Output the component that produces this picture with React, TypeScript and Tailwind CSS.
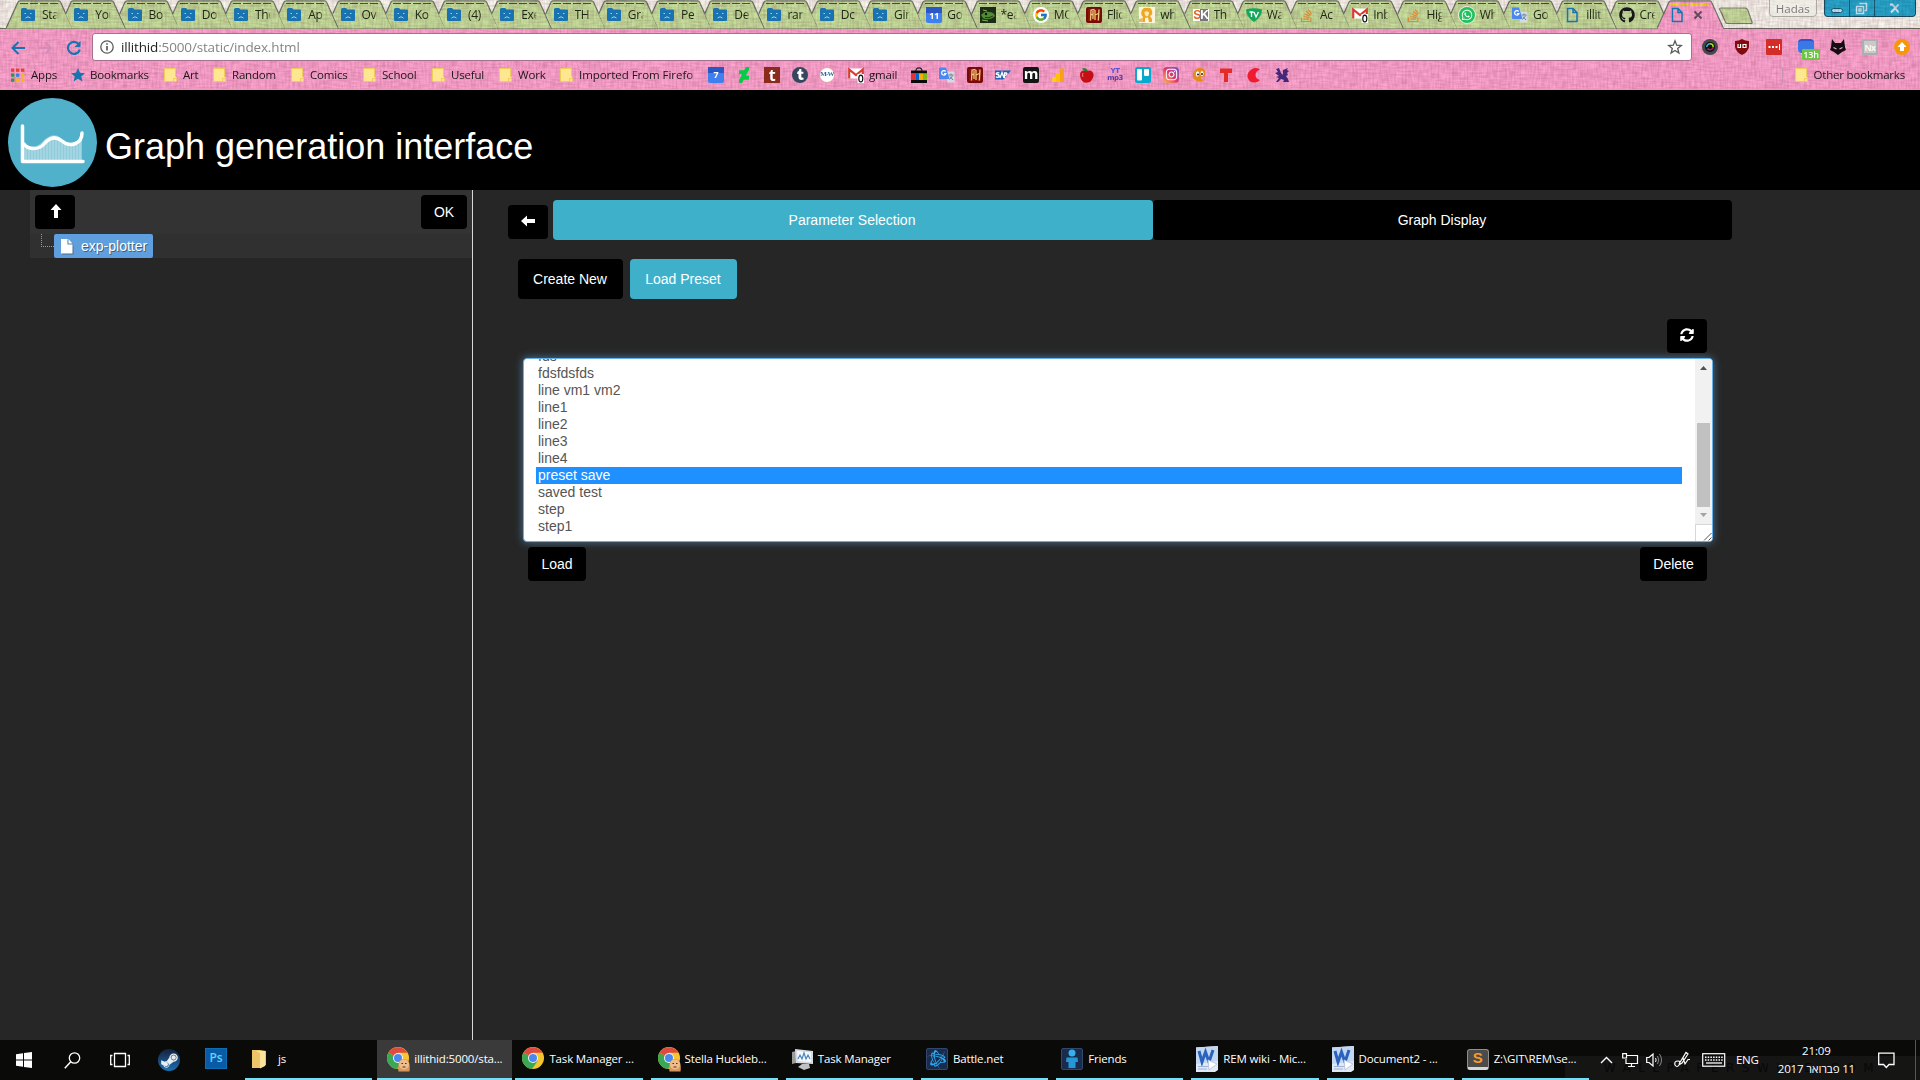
import React from "react";
import { FcGoogle } from "react-icons/fc";
import { FaStackOverflow, FaWhatsapp, FaGithub, FaInstagram, FaTumblr, FaDeviantart, FaSteamSymbol, FaSyncAlt, FaBattleNet } from "react-icons/fa";

type P = { children?: React.ReactNode; className?: string };

const Svg = ({ w = 16, h = 16, vb, children, className = "" }: P & { w?: number; h?: number; vb?: string }) => (
  <svg width={w} height={h} viewBox={vb ?? `0 0 ${w} ${h}`} fill="none" className={`block shrink-0 ${className}`}>
    {children}
  </svg>
);

const Sad = () => (
  <Svg>
    <path d="M0 2.500Q0 1 1.500 1H5L6.500 2.500H13Q14 2.500 14 3.500V13Q14 14 13 14H1Q0 14 0 13Z" fill="#1873b0" />
    <path d="M3.500 6.500h1.500M9 6.500h1.500M4.500 11Q7 8.500 9.500 11" stroke="#b9d9ec" strokeWidth="0.900" />
  </Svg>
);
const Cal = ({ n }: { n: string }) => (
  <div className="relative flex h-4 w-4 items-center justify-center rounded-b-[2px] border-t-[6px] border-[#2a56c6] bg-[#3f7ff0]">
    <span className="-mt-1.5 font-['Open_Sans',sans-serif] text-[9px] leading-none font-bold text-white">{n}</span>
  </div>
);
const Gmail = () => (
  <Svg>
    <path d="M0 1.500h16v10H0z" fill="#fff" />
    <path d="M1.200 11.500V2.500L8 8L14.800 2.500V11.500" stroke="#d93a32" strokeWidth="2.200" />
    <rect x="9.500" y="7" width="6.500" height="9" fill="#fff" />
    <ellipse cx="12.800" cy="11.500" rx="2" ry="3.300" stroke="#111" strokeWidth="1.200" />
  </Svg>
);
const FH = () => (
  <Svg>
    <rect width="16" height="16" rx="2" fill="#8c120c" />
    <rect x="1" y="1" width="14" height="14" rx="1" stroke="#5a0806" />
    <path d="M4.500 13.500L5 3L8.500 2.500M4.800 7.500H7.500M9 3V13M9 8L12.500 6.500M13 2.500L12.300 13.500M7 4V12" stroke="#f0c878" strokeWidth="1.300" />
  </Svg>
);
const Translate = () => (
  <Svg>
    <path d="M6 4.500h9.500V15.500H8.500z" fill="#d5dbe2" />
    <path d="M9.500 8h5M12 6.500V8M13.800 8.500L10.500 12.500M11 9.500L14 13" stroke="#68809a" strokeWidth="1" />
    <path d="M0 1.500Q0 .5 1 .5H7L10.500 12H1Q0 12 0 11z" fill="#4a87ee" />
    <path d="M6.600 4.500A2.200 2.200 0 1 0 7 6.500H5" stroke="#fff" strokeWidth="1.200" />
  </Svg>
);
const PageIcon = () => (
  <Svg>
    <path d="M2.500 1.500H8L12 5.500V14.500H2.500zM8 1.500V5.500H12" stroke="#1873b0" strokeWidth="1.500" />
  </Svg>
);
const Folder = () => (
  <Svg w={14}>
    <path d="M.5 1.500H11.500V9.500L12.500 10.500V14.500H.5z" fill="#ffe78f" stroke="#eecb5d" />
    <path d="M9.500 14V11.500H12" stroke="#eecb5d" />
  </Svg>
);
const Letter = ({ children, className = "" }: P) => (
  <div className={`flex h-4 w-4 shrink-0 items-center justify-center font-['Open_Sans',sans-serif] leading-none font-bold ${className}`}>{children}</div>
);
const Frog = () => (
  <Svg>
    <rect width="16" height="16" fill="#1c2a16" />
    <path d="M1 8Q5 3 9 5Q14 5 15 9Q11 13 5 12Q2 11 1 8z" fill="#4f8a35" />
    <path d="M3 3l4 1M2 13l6 1" stroke="#86b457" />
    <circle cx="6" cy="7" r="1.200" fill="#111" />
    <path d="M5 10.500Q9 11.500 13 9" stroke="#22381a" />
  </Svg>
);
const Blonde = () => (
  <Svg>
    <rect width="16" height="16" fill="#fbf3dc" />
    <path d="M3 3Q5 0 8 1Q12 0 13 4Q14 8 11 9L13 12V15H3L4 10Q1 7 3 3z" fill="#eea720" />
    <path d="M5.500 5Q8 3.500 10 5.500Q10 9 8 9.500Q5.500 9 5.500 5z" fill="#fde7b8" />
    <path d="M6 11L9 10.500L10 15H6z" fill="#fff6e0" />
    <path d="M0 12l4-1v4H0z" fill="#e9bb62" />
  </Svg>
);
const Stack = () => <FaStackOverflow size={15} className="text-[#e08a2c]" />;

const favs: Array<[string, React.ReactNode]> = [
  ...["Sta", "You", "Bo", "Do", "The", "Ap", "Ov", "Ko", "(4)", "Exe", "TH", "Gra", "Pe", "De", "ran", "Dc", "Gin"].map(
    (t): [string, React.ReactNode] => [t, <Sad />],
  ),
  ["Go", <Cal n="11" />],
  ["*ea", <Frog />],
  ["MO", <div className="flex h-4 w-4 items-center justify-center rounded-full bg-white"><FcGoogle size={14} /></div>],
  ["Flic", <FH />],
  ["wh", <Blonde />],
  ["Th", <div className="flex h-3 w-4 items-center justify-center bg-white font-['Liberation_Sans',sans-serif] text-[12px] leading-none font-bold tracking-[-1px] text-[#e8622a]">S<span className="bg-[#777] text-white">K</span></div>],
  ["Wa", <Svg><path d="M0 2.500Q8 0 16 2.500Q16 10 8 15Q0 10 0 2.500z" fill="#12a75b" /><path d="M3.500 5h4M5.500 5v5M8 5l2 5l2.500-5" stroke="#fff" strokeWidth="1.300" /></Svg>],
  ["Ac", <Stack />],
  ["Inb", <Gmail />],
  ["Hig", <Stack />],
  ["Wh", <div className="flex h-4 w-4 items-center justify-center rounded-full bg-[#22c15e] text-white ring-1 ring-white/70"><FaWhatsapp size={12} /></div>],
  ["Go", <Translate />],
  ["illit", <PageIcon />],
  ["Cre", <FaGithub size={16} className="text-[#15181a]" />],
];

const TabShape = ({ first, active }: { first?: boolean; active?: boolean }) => (
  <svg width="68" height="30" viewBox="0 0 68 30" fill="none" className="absolute top-0 left-0 z-0">
    <path d={first || active ? "M0 28.500L12 2Q12.500 .8 14 .8H52.500Q54 .8 54.500 2L66.500 28.500Z" : "M6.700 14L12 2Q12.500 .8 14 .8H52.500Q54 .8 54.500 2L66.500 28.500H13Z"} fill={active ? "#fca6cf" : "#c6e09c"} />
    <path d={first || active ? "M0 28.500L12 2Q12.500 .8 14 .8H52.500Q54 .8 54.500 2L66.500 28.500" : "M6.700 14L12 2Q12.500 .8 14 .8H52.500Q54 .8 54.500 2L66.500 28.500"} stroke="#71796a" strokeWidth="1.200" />
    {active ? <path d="M1 28.500H66" stroke="#fca6cf" strokeWidth="2" /> : null}
    <path d={active ? "M13.500 4.500H53" : "M14 3.500H52"} stroke={active ? "#f7e414" : "#a3159b"} strokeWidth={active ? 2 : 1.200} strokeDasharray="8 2" />
  </svg>
);

const bookmarks: Array<[number, React.ReactNode, string?]> = [
  [60, <Svg w={14}>{[0, 1, 2].map((r) => [0, 1, 2].map((c) => <rect key={`${r}${c}`} x={c * 5} y={1.5 + r * 5} width="3.300" height="3.300" fill={[["#e84235", "#e84235", "#e84235"], ["#2d9a4b", "#3c7de0", "#f5b912"], ["#2d9a4b", "#f5b912", "#f5b912"]][r][c]} />))}</Svg>, "Apps"],
  [93, <Svg w={14} vb="1 1 14 14"><path d="M8 1L10 5.800L15 6.200L11.200 9.500L12.500 14.500L8 11.800L3.500 14.500L4.800 9.500L1 6.200L6 5.800z" fill="#1873b0" /></Svg>, "Bookmarks"],
  [49, <Folder />, "Art"],
  [78, <Folder />, "Random"],
  [72, <Folder />, "Comics"],
  [69, <Folder />, "School"],
  [67, <Folder />, "Useful"],
  [61, <Folder />, "Work"],
  [148, <Folder />, "Imported From Firefo"],
  [28, <Cal n="7" />],
  [28, <FaDeviantart size={16} className="text-[#05cc47]" />],
  [28, <Letter className="bg-[#8a2b1d] text-[16px] text-white">t</Letter>],
  [28, <div className="flex h-4 w-4 items-center justify-center rounded-full bg-[#36465d] text-white"><FaTumblr size={11} /></div>],
  [28, <div className="flex h-3.5 w-3.5 items-center justify-center rounded-full bg-white font-['Liberation_Serif',serif] text-[7px] leading-none font-bold tracking-[-0.8px] text-[#2f6f9f] ring-1 ring-[#e8a0a8]">M-W</div>],
  [63, <Gmail />, "gmail"],
  [28, <Svg><path d="M5 4Q5 .8 8 .8Q11 .8 11 4" stroke="#222" strokeWidth="1.200" /><path d="M0 3.500h16v3H0zM0 13h16v3H0z" fill="#0a0a0a" /><path d="M0 6.500h4.500V13H0z" fill="#e43137" /><path d="M4.500 6.500H8V13H4.500z" fill="#0063d1" /><path d="M8 6.500h4V13H8z" fill="#f4ae01" /><path d="M12 6.500h4V13h-4z" fill="#85b716" /></Svg>],
  [28, <Translate />],
  [28, <FH />],
  [28, <Svg><path d="M0 3.500h16L8.500 12.500H0z" fill="#1a62b5" /><path d="M4.500 6Q1 5 1.200 7Q4.500 7.500 4.200 9.500Q3 11 .8 9.800M5 11L7 5.500L9 11M9.500 11V6H11.500Q13 7.500 10 8.500" stroke="#fff" strokeWidth="1.300" /></Svg>],
  [28, <Letter className="rounded-[2px] bg-[#141414] pb-0.5 text-[15px] text-white">m</Letter>],
  [28, <Svg><path d="M1 10h4v5H1z" fill="#ffc928" /><path d="M5 6h4v9H5z" fill="#ffc107" /><path d="M9 1.500h4V15H9z" fill="#f9a01b" /></Svg>],
  [28, <Svg><path d="M8 4Q2 2 1 7Q1 13 5 15.500Q8 16 11 15Q15 11 14.500 7Q13 2 8 4z" fill="#c50f14" /><path d="M3 1.500Q7-.5 9 4Q5 5 3 1.500z" fill="#2f7d32" /><path d="M4 6Q3 8 4 10" stroke="#f0797c" /></Svg>],
  [28, <div className="w-4 text-center font-['DejaVu_Sans',sans-serif] text-[7px] leading-[7px] font-bold tracking-[-0.5px] text-[#5a55d6]"><div>YT</div><div className="text-[#5c3aa5]">mp3</div></div>],
  [28, <Svg><rect width="16" height="16" rx="2" fill="#06aacf" /><rect x="2" y="2" width="5" height="11.500" rx="1" fill="#fff" /><rect x="9" y="2" width="5" height="7" rx="1" fill="#fff" /></Svg>],
  [28, <div className="flex h-4 w-4 items-center justify-center rounded bg-linear-to-tr from-[#fdb645] via-[#e0356c] to-[#6b4bd0] text-white"><FaInstagram size={13} /></div>],
  [28, <Svg><path d="M13 2Q8-1 4 3Q0 8 3 12Q7 16 13 14Q9 12 10 10L14 9Q15 4 13 2z" fill="#e58a1c" /><ellipse cx="6.500" cy="7" rx="1.700" ry="2.800" fill="#fff" /><ellipse cx="11" cy="6.500" rx="1.500" ry="2.500" fill="#fff" /><circle cx="7" cy="7.500" r="1" fill="#222" /><circle cx="11" cy="7" r="1" fill="#222" /></Svg>],
  [28, <Svg><path d="M1 1.500h12v4.500H9V15H5V6H1z" fill="#e62b25" /></Svg>],
  [28, <Svg><path d="M13 2.500Q9 0 5 2Q0 5 .5 10Q2 16 8 15.500Q11 15 13 13Q8.500 12 8.500 8Q8.500 4 13 2.500z" fill="#ee1c2e" /></Svg>],
  [28, <Svg><path d="M1 2L4 1L6 6L8 8L8 3L13 1L12 3L14 4L12 6L13 8L11 9L13 12L14 15H8L9 13L6 12L3 15H1L4 11L1 10L4 9L0 6L3 5z" fill="#43277b" /></Svg>],
];

const Texture = () => (
  <svg width="1920" height="90" className="pointer-events-none absolute top-0 left-0 z-[1] mix-blend-multiply">
    <filter id="weft" x="0" y="0" width="100%" height="100%">
      <feTurbulence type="fractalNoise" baseFrequency="0.1 0.55" numOctaves="1" seed="3" />
      <feColorMatrix values="0 0 0 0 0.4  0 0 0 0 0.2  0 0 0 0 0.3  1.3 0 0 0 -0.45" />
    </filter>
    <filter id="warp" x="0" y="0" width="100%" height="100%">
      <feTurbulence type="fractalNoise" baseFrequency="0.55 0.1" numOctaves="1" seed="8" />
      <feColorMatrix values="0 0 0 0 0.4  0 0 0 0 0.2  0 0 0 0 0.3  1.3 0 0 0 -0.45" />
    </filter>
    <rect width="1920" height="90" filter="url(#weft)" opacity="0.45" />
    <rect width="1920" height="90" filter="url(#warp)" opacity="0.45" />
  </svg>
);

function Browser() {
  return (
    <header className="relative isolate h-[90px] overflow-hidden border-b border-[#b9b5b0] bg-[#f7f7ec] font-['Open_Sans','Noto_Sans',sans-serif] text-[11.5px] tracking-[-0.2px] text-[#1f141a]">
      <Texture />
      <div className="flex h-[28px] pl-1.5">
        {favs.map(([t, icon], i) => (
          <div key={i} className="relative w-[53.26px] shrink-0">
            <TabShape first={i === 0} />
            <div className="relative z-[2] flex h-full items-center pt-0.5 pl-[15px]">
              <div className="w-[21px]">{icon}</div>
              <div className="w-4 overflow-hidden mask-r-from-75% mask-r-to-100% text-[12px] tracking-[-0.3px] whitespace-nowrap text-[#1c2712]">{t}</div>
            </div>
          </div>
        ))}
        <div className="relative w-[62px] shrink-0">
          <TabShape active />
          <div className="relative z-[2] flex h-full items-center pt-0.5 pl-[13px]">
            <PageIcon />
            <Svg w={10} h={10} className="ml-[7px]"><path d="M1.500 1.500l7 7M8.500 1.500l-7 7" stroke="#5e4a54" strokeWidth="1.800" /></Svg>
          </div>
        </div>
        <Svg w={34} h={18} className="mt-[7px]"><path d="M1 3Q0 1 2 1H26Q28 1 28.800 3L33 15Q33.500 16.500 32 16.500H8.500Q7 16.500 6.500 15z" fill="#c6e09c" stroke="#7c8273" strokeWidth="1.200" /></Svg>
        <div className="relative z-[2] mt-[-4px] ml-[16px] flex h-[21px] w-12 items-center justify-center rounded border border-[#a9a9a1] bg-[#efeee6]/60 pt-1 text-[11.5px] tracking-normal text-[#777] [text-shadow:0_0_2px_#fff]">Hadas</div>
        <div className="ml-[7px] flex h-[17px] w-[92px] rounded-b border border-t-0 border-[#1b4f63] bg-[#27a8cd]">
          <div className="flex w-[25px] items-center justify-center border-r border-[#1b5f78]"><div className="mt-1 h-[5px] w-3 rounded-sm border border-[#1d5c74] bg-[#bfe6f1]" /></div>
          <div className="flex w-[25px] items-center justify-center border-r border-[#1b5f78]"><Svg w={13} h={13}><path d="M4.500 1.500h7v7h-2M1.500 4.500h7v7h-7zM4 7h2v2H4z" stroke="#cdebf4" strokeWidth="1.500" /></Svg></div>
          <div className="flex flex-1 items-center justify-center"><Svg w={11} h={11}><path d="M1 1.500h2.500L9.500 9.500M9.500 1.500L2 9.500" stroke="#cdebf4" strokeWidth="2" /></Svg></div>
        </div>
      </div>

      <div className="h-[62px] border-t border-[#6f6f63] bg-[#fca6cf] bg-clip-padding">
        <div className="relative z-[2] flex h-[32px] items-end pl-[11px]">
          <div className="flex h-[27px] w-[81px] items-center gap-3">
            <Svg><path d="M14 8H1.500M7.500 2L1.500 8L7.500 14" stroke="#1873b0" strokeWidth="2" /></Svg>
            <Svg><path d="M0 8H12M6.500 2.500L12 8L6.500 13.500" stroke="#d58bb8" strokeWidth="2" /></Svg>
            <Svg><path d="M11.600 4A6 6 0 1 0 12.800 9.500" stroke="#1873b0" strokeWidth="2.200" /><path d="M13.500 1v6H7.500z" fill="#1873b0" /></Svg>
          </div>
          <div className="flex h-[28px] w-[1600px] items-center rounded-[3px] border border-[#a8708c] bg-white px-[7px]">
            <Svg><circle cx="7" cy="8" r="6.200" stroke="#5a5a5a" strokeWidth="1.300" /><path d="M7 7v4.500M7 4.200v1.600" stroke="#5a5a5a" strokeWidth="1.700" /></Svg>
            <div className="ml-[5px] text-[13.5px] tracking-[-0.15px] text-[#858585]"><span className="text-[#222]">illithid</span>:5000/static/index.html</div>
            <Svg className="mr-px ml-auto"><path d="M8 1.800L9.700 6.200L14.300 6.500L10.700 9.500L11.900 14L8 11.500L4.100 14L5.300 9.500L1.700 6.500L6.300 6.200z" stroke="#5a5a5a" strokeWidth="1.300" /></Svg>
          </div>
          <div className="ml-[10px] flex h-[28px] items-center gap-4">
            <Svg><circle cx="8" cy="8" r="8" fill="#45474b" /><circle cx="8" cy="8" r="5" fill="#111" /><path d="M4.800 8A3.200 3.200 0 0 1 8 4.800" stroke="#2dc1d8" strokeWidth="1.500" /><path d="M8 4.800A3.200 3.200 0 0 1 11.200 8" stroke="#a8e01e" strokeWidth="1.500" /><path d="M11.200 8A3.200 3.200 0 0 1 5.500 9.500" stroke="#b21a8a" strokeWidth="1.500" /></Svg>
            <Svg><path d="M8 0Q11 2 15 2V8Q14 13 8 16Q2 13 1 8V2Q5 2 8 0z" fill="#800a0e" /><path d="M4 5v3.500h2.500V5M9 5v3.500h3V5.500H9" stroke="#fff" strokeWidth="1.200" /></Svg>
            <Svg><rect width="16" height="16" rx="1" fill="#d32d27" /><path d="M2.500 7h2v2h-2zM6 7h2v2H6zM9.500 7h2v2h-2zM13 5h1v6h-1z" fill="#fff" /></Svg>
            <div className="relative h-4 w-4"><div className="h-3.5 w-4 rounded-sm border-t-2 border-[#2a56c6] bg-[#3b78e7]" /><div className="absolute top-[10px] left-1 flex h-[11px] w-[18px] items-center justify-center rounded-[1px] bg-[#6cc644] text-[9px] leading-none font-semibold text-white">13h</div></div>
            <Svg><path d="M2 0L5 4H11L14 0L15 8L16 11L12 13L8 16L4 13L0 11L1 8z" fill="#140c12" /><path d="M3.500 8.500L6.500 10M12.500 8.500L9.500 10" stroke="#f7a6cc" strokeWidth="1.200" /></Svg>
            <div className="flex h-4 w-4 items-center justify-center border-2 border-[#aeaeae] bg-[#c9c9c9] text-[9px] leading-none font-semibold tracking-[-0.5px] text-white">Nx</div>
            <Svg><circle cx="8" cy="8" r="8" fill="#f7960a" /><path d="M8 3L12.500 8H10V12H6V8H3.500z" fill="#fff" /></Svg>
          </div>
        </div>
        <div className="relative z-[2] flex h-[27px] items-center pl-[11px]">
          {bookmarks.map(([w, icon, t], i) => (
            <div key={i} className="flex shrink-0 items-center gap-[5px]" style={{ width: w }}>
              {icon}
              {t ? <span className={`whitespace-nowrap ${i === 0 ? "pl-px" : ""} ${t.length > 12 ? "mask-r-from-95% mask-r-to-110% tracking-[-0.05px]" : ""}`}>{t}</span> : null}
            </div>
          ))}
          <div className="mr-3 ml-auto h-4 w-px bg-[#c693b3]" />
          <Folder />
          <span className="mr-[15px] ml-[5px]">Other bookmarks</span>
        </div>
      </div>
    </header>
  );
}

const Btn = ({ children, className = "" }: P) => (
  <button className={`flex shrink-0 items-center justify-center rounded text-[14px] leading-5 text-white ${className}`}>{children}</button>
);

const presets = ["fds", "fdsfdsfds", "line vm1 vm2", "line1", "line2", "line3", "line4", "preset save", "saved test", "step", "step1"];

function GraphPage() {
  return (
    <div className="flex h-[950px] flex-col font-['Liberation_Sans',Arial,sans-serif]">
      <div className="flex h-[100px] shrink-0 bg-black pt-2 pl-2">
        <Svg w={89} h={89}>
          <ellipse cx="44.500" cy="44.500" rx="44.500" ry="44.500" fill="#51b1ca" />
          <path d="M15 45Q26 54 36 42Q47 32 56 43Q65 49 74 38V62H15z" fill="#8fcbda" />
          <path d="M18 50V62M21 51V62M24 51V62M27 50V62M30 50V62M33 48V62M36 45V62M39 42V62M42 40V62M45 39V62M48 39V62M51 41V62M54 43V62M57 46V62M60 47V62M63 47V62M66 46V62M69 44V62M72 41V62" stroke="#b4dfe9" />
          <path d="M14.500 28V63.500H75" stroke="#fff" strokeWidth="3.500" strokeLinecap="round" strokeLinejoin="round" />
          <path d="M16 46C20 52 31 52 36 46C42 39 48 38 54 43C62 50 74 46 74 35" stroke="#fff" strokeWidth="3.500" strokeLinecap="round" />
        </Svg>
        <h1 className="mt-[29px] ml-2 text-[36px] leading-[40px] whitespace-nowrap text-white">Graph generation interface</h1>
      </div>

      <div className="flex flex-1 bg-[#262626]">
        <aside className="w-[473px] shrink-0 border-r border-[#d8d8d8] pl-[30px]">
          <div className="flex h-11 justify-between bg-[#333] py-[5px] pr-[5px] pl-[5px]">
            <Btn className="h-[34px] w-10 bg-black">
              <Svg w={12} h={14} className="-mt-0.5 ml-px"><path d="M6 0L11.500 6H8V14H4V6H.5z" fill="#fff" /></Svg>
            </Btn>
            <Btn className="h-[34px] w-[46px] bg-black">OK</Btn>
          </div>
          <div className="flex h-6 bg-[#303030] pl-[11px]">
            <div className="h-[13px] w-[13px] border-b border-l border-dotted border-[#999]" />
            <div className="flex h-6 w-[99px] items-center rounded-xs bg-[#5f9fdd] pl-[7px] text-[14px] text-white [text-shadow:1px_1px_0_#3e5f7d]">
              <Svg w={12} h={15} className="mr-2 drop-shadow-[1px_1px_0_#4a6d8c]"><path d="M0 0H6.500V5.500H11.500V14.500H0zM7.500 0L11.500 4.500H7.500z" fill="#fff" /></Svg>
              exp-plotter
            </div>
          </div>
        </aside>

        <main className="w-[1240px] pl-[35px]">
          <div className="flex items-start pt-[10px]">
            <Btn className="mt-[5px] mr-[5px] h-[34px] w-10 bg-black">
              <Svg w={14} h={12} className="-mt-0.5 -ml-px"><path d="M0 6L6 .5V4H14V8H6V11.500z" fill="#fff" /></Svg>
            </Btn>
            <Btn className="h-10 w-[600px] bg-[#3eb0ca] pr-0.5">Parameter Selection</Btn>
            <Btn className="h-10 w-[579px] bg-black pr-px">Graph Display</Btn>
          </div>
          <div className="mt-[19px] flex gap-[7px] pl-[10px]">
            <Btn className="h-10 w-[105px] bg-black pr-px">Create New</Btn>
            <Btn className="h-10 w-[107px] bg-[#3eb0ca] pr-px">Load Preset</Btn>
          </div>
          <div className="mt-[20px] flex justify-end pr-[6px]">
            <Btn className="h-[34px] w-10 bg-black"><FaSyncAlt size={14} className="-mt-0.5" /></Btn>
          </div>
          <div className="mt-[5px] ml-[15px] flex h-[184px] w-[1190px] overflow-hidden rounded border border-[#66afe9] bg-white shadow-[0_0_8px_rgba(102,175,233,0.6)]">
            <div className="mt-[-11px] flex-1 pr-[13px] pl-3">
              {presets.map((p) => (
                <div key={p} className={`h-[17px] pl-0.5 text-[14px] leading-[16px] ${p === "preset save" ? "bg-[#1e90ff] text-white" : "text-[#555]"}`}>{p}</div>
              ))}
            </div>
            <div className="flex w-[17px] flex-col items-center bg-[#f1f1f1]">
              <Svg w={7} h={4} className="mt-[7px]"><path d="M3.500 0L7 4H0z" fill="#505050" /></Svg>
              <div className="mt-[53px] h-[84px] w-[13px] bg-[#c1c1c1]" />
              <Svg w={7} h={4} className="mt-[6px]"><path d="M3.500 4L7 0H0z" fill="#a3a3a3" /></Svg>
              <div className="mt-auto flex h-[17px] w-full items-end justify-end border-t border-l border-[#d8d8d8] bg-white">
                <Svg w={9} h={9}><path d="M1 8.500L8.500 1M5.500 8.500L8.500 5.500" stroke="#555" /></Svg>
              </div>
            </div>
          </div>
          <div className="mt-[5px] flex justify-between pr-[6px] pl-5">
            <Btn className="h-[34px] w-[58px] bg-black">Load</Btn>
            <Btn className="h-[34px] w-[67px] bg-black">Delete</Btn>
          </div>
        </main>
      </div>
    </div>
  );
}

const Chrome = ({ badge }: { badge?: boolean }) => (
  <Svg w={24} h={26}>
    <circle cx="11" cy="12" r="11" fill="#f6c52d" />
    <path d="M11 12L1.500 6.500A11 11 0 0 0 10 23L15.800 14.800z" fill="#3aa757" />
    <path d="M11 12L1.500 6.500A11 11 0 0 1 20.500 6.800H11z" fill="#dd4b3e" />
    <circle cx="11" cy="12" r="5" fill="#f4f4f4" />
    <circle cx="11" cy="12" r="4" fill="#4a88ee" />
    {badge ? (
      <>
        <path d="M11.500 25.500Q10 13 17 13Q24 13 22.500 25.500z" fill="#d9955c" />
        <circle cx="17" cy="18.500" r="5" fill="#eebd8a" />
        <path d="M14.500 17.500h1.500M18 17.500h1.500M15.500 21h3" stroke="#4d2d1c" strokeWidth="1.200" />
      </>
    ) : null}
  </Svg>
);
const Word = () => (
  <Svg w={22} h={26}>
    <path d="M0 1.500L22 0V24L19 26H0z" fill="#dfe9f7" />
    <path d="M0 1.500L22 0V15L0 18z" fill="#c4d7f0" />
    <path d="M3 5L6 16L9.500 6L13 16L17 4" stroke="#2a62bd" strokeWidth="3" />
    <path d="M2 20.500H13M2 23H11" stroke="#9db3d6" />
    <path d="M12 14L21 18L13 24z" fill="#fff" stroke="#b8c8e0" />
  </Svg>
);
const Tile = ({ children }: P) => (
  <div className="flex h-[22px] w-[22px] items-center justify-center rounded-xs border border-[#32476b] bg-[#1a2c4d] text-[#2ea8ee]">{children}</div>
);

const tasks: Array<[string, React.ReactNode]> = [
  ["js", <Svg w={16} h={20}><path d="M0 1H8L14 2V16L8 19H0z" fill="#ecc568" /><path d="M4 2H13V17L8 19.500V4z" fill="#ffe39a" /></Svg>],
  ["illithid:5000/sta...", <Chrome badge />],
  ["Task Manager ...", <Chrome />],
  ["Stella Huckleb...", <Chrome badge />],
  ["Task Manager", <Svg w={24} h={22}><path d="M1 4L5 3V15L1 16z" fill="#9b9b9b" /><path d="M4 1L22 3V16L5 15z" fill="#d9dcdf" /><path d="M6 3L20 4.500V14L7 13z" fill="#f5f9fc" /><path d="M7 11L9 7L11 11L13 5L15 11L17 7L19 11" stroke="#4b86bd" strokeWidth="1.200" /><path d="M11 16h7l1 4-6 2-6-3z" fill="#bfc1c4" /></Svg>],
  ["Battle.net", <Tile><FaBattleNet size={19} /></Tile>],
  ["Friends", <Tile><Svg w={16} h={20}><circle cx="8" cy="4" r="3.500" fill="#35b0ec" /><path d="M2.500 8.500H13.500L14 13H11.500V19H4.500V13H2z" fill="#2497d8" /></Svg></Tile>],
  ["REM wiki - Mic...", <Word />],
  ["Document2 - ...", <Word />],
  ["Z:\\GIT\\REM\\se...", <div className="flex h-[21px] w-[22px] items-start justify-center rounded-[3px] border border-b-[3px] border-[#8f8f8f] border-b-[#d6d6d6] bg-[#4b4b4b] font-['Liberation_Sans',sans-serif] text-[15px] leading-[16px] font-bold text-[#f79a2b]">S</div>],
];

function Taskbar() {
  return (
    <footer className="relative flex h-10 bg-[#0a0a09] font-['Open_Sans','Noto_Sans',sans-serif] text-[11.5px] tracking-[-0.15px] text-white">
      <div className="absolute right-0 bottom-0 flex h-6 w-[355px] items-center justify-center bg-[#151514] font-['DejaVu_Sans',sans-serif] text-[12px] tracking-[7.5px] text-[#080808]">WALLPAPERSWIDE.COM</div>
      <div className="flex w-[242px] shrink-0 items-center pl-4">
        <Svg className="w-4"><path d="M0 2.200L7 1.200V7.500H0zM8 1L16 0V7.500H8zM0 8.500H7V14.800L0 13.800zM8 8.500H16V16L8 15z" fill="#fff" /></Svg>
        <Svg w={17} h={17} className="ml-8"><circle cx="10.500" cy="6" r="5.200" stroke="#fff" strokeWidth="1.300" /><path d="M6.800 9.800L.8 16.200" stroke="#fff" strokeWidth="1.500" /></Svg>
        <Svg w={20} h={16} className="ml-[29px]"><path d="M4.500 1.500h11v13h-11zM2.500 3.500H.7v9H2.500M17.500 3.500h1.800v9H17.500" stroke="#fff" strokeWidth="1.300" /></Svg>
        <div className="ml-[28px] flex h-[22px] w-[22px] items-center justify-center rounded-full bg-linear-to-b from-[#13213f] to-[#1a72b4] text-[#e8edf2]"><FaSteamSymbol size={19} /></div>
        <div className="-mt-1 ml-[25px] flex h-[21px] w-[22px] items-center justify-center border border-[#0f6fb5] bg-[#0a5ba6] text-[12px] leading-none font-semibold text-[#5fd2ff]">Ps</div>
      </div>
      {tasks.map(([t, icon], i) => (
        <div key={i} className={`relative flex w-[135.2px] shrink-0 flex-col ${i === 1 ? "bg-[#3b3a3a]" : "px-[3px] pr-[5px]"}`}>
          <div className={`flex h-[38px] items-center ${i === 1 ? "pl-[10px]" : i > 3 ? "pl-[5px]" : "pl-[7px]"}`}>
            <div className={`shrink-0 ${i === 0 ? "w-[26px]" : "w-[27px]"}`}>{icon}</div>
            <span className="whitespace-nowrap">{t}</span>
          </div>
          <div className="h-0.5 bg-[#76dff8]" />
        </div>
      ))}
      <div className="relative flex flex-1 items-center pl-[6px]">
        <Svg w={13} h={8}><path d="M1 7L6.500 1.500L12 7" stroke="#fff" strokeWidth="1.400" /></Svg>
        <Svg w={17} h={16} className="ml-[9px]"><path d="M4 3.500H15.500V11.500H4V7M9.500 11.500V14.500M6 14.500H13M.7 1.700H4.500V6H.7z" stroke="#fff" strokeWidth="1.200" /></Svg>
        <Svg w={18} h={16} className="ml-[7px]"><path d="M.7 5.500H3L7 2V14L3 10.500H.7z" stroke="#fff" strokeWidth="1.200" /><path d="M9.500 6Q10.800 8 9.500 10" stroke="#fff" /><path d="M11.500 4Q14 8 11.500 12M13.500 2Q17.500 8 13.500 14" stroke="#888" /></Svg>
        <Svg w={18} h={18} className="ml-[10px]"><path d="M1 14Q0 10 4 10Q7 10 5 14Q3 17 1 14M5 13L12 1.500L14 3L8 12L5.500 13.500M9 7L11 13L14 8.500H16" stroke="#fff" strokeWidth="1.200" /></Svg>
        <Svg w={24} h={14} className="ml-[10px]"><rect x=".7" y=".7" width="22" height="12.500" stroke="#fff" strokeWidth="1.200" /><path d="M3 4.200H21M3 7H21" stroke="#fff" strokeWidth="1.400" strokeDasharray="1.500 1.200" /><path d="M4 10H20" stroke="#fff" strokeWidth="1.300" /></Svg>
        <span className="ml-[10px] w-[24px]">ENG</span>
        <div className="ml-[10px] flex w-[93px] flex-col items-center leading-[18px]">
          <div>21:09</div>
          <div dir="rtl" className="whitespace-nowrap">11 פברואר 2017</div>
        </div>
        <Svg w={17} h={17} className="ml-[15px]"><path d="M.7 1.200H16V12.500H11L8.300 15.500L5.600 12.500H.7z" stroke="#fff" strokeWidth="1.300" /></Svg>
        <div className="mr-1 ml-auto h-full w-px bg-[#555]" />
      </div>
    </footer>
  );
}

export default function App() {
  return (
    <div className="h-[1080px] w-[1920px] overflow-hidden bg-[#262626]">
      <Browser />
      <GraphPage />
      <Taskbar />
    </div>
  );
}
